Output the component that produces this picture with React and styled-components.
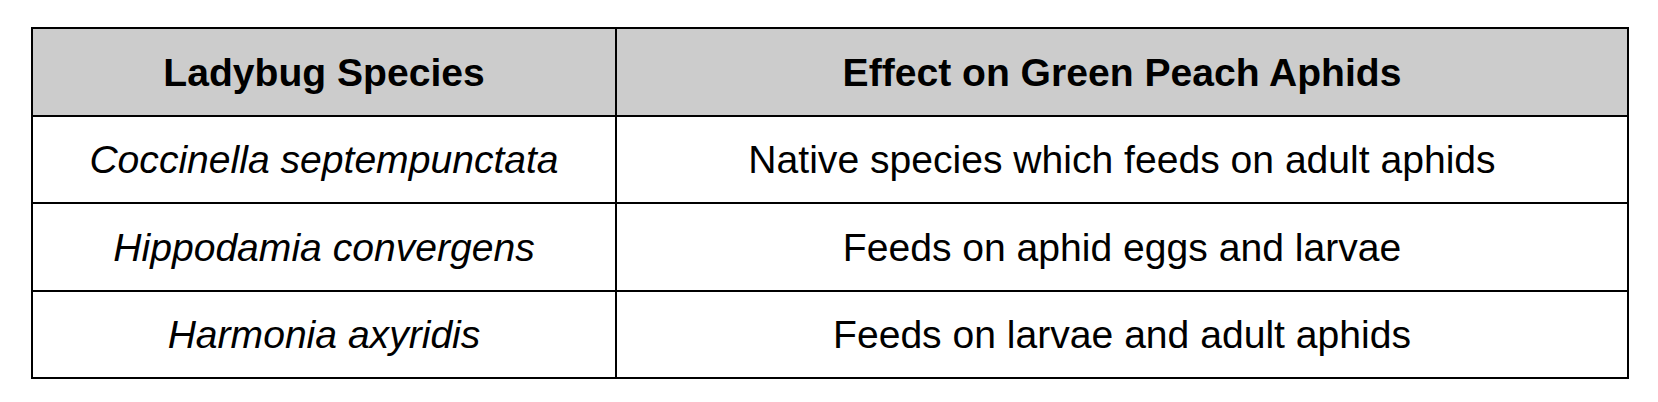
import React from "react";
import styled, { createGlobalStyle } from "styled-components";

const Global = createGlobalStyle`
  html, body { margin: 0; padding: 0; background: #fff; }
  body { font-family: "Liberation Sans", Arial, sans-serif; color: #000; }
`;

const Page = styled.div`
  padding: 27px 0 0 31px;
`;

const Table = styled.div`
  display: grid;
  grid-template-columns: 584px 1012px;
  grid-auto-rows: 87.5px;
  width: max-content;
  border-top: 2px solid #000;
  border-left: 2px solid #000;
`;

const Cell = styled.div`
  display: flex;
  align-items: center;
  justify-content: center;
  box-sizing: border-box;
  border-right: 2px solid #000;
  border-bottom: 2px solid #000;
  font-size: 39.1px;
  line-height: 1;
  padding-top: 1px;
  white-space: nowrap;
  background: ${(p) => (p.$head ? "#cccccc" : "#ffffff")};
  font-weight: ${(p) => (p.$head ? 700 : 400)};
  font-style: ${(p) => (p.$italic ? "italic" : "normal")};
`;

const rows = [
  ["Coccinella septempunctata", "Native species which feeds on adult aphids"],
  ["Hippodamia convergens", "Feeds on aphid eggs and larvae"],
  ["Harmonia axyridis", "Feeds on larvae and adult aphids"],
];

export default function App() {
  return (
    <>
      <Global />
      <Page>
        <Table>
          <Cell $head>Ladybug Species</Cell>
          <Cell $head>Effect on Green Peach Aphids</Cell>
          {rows.map(([a, b]) => (
            <React.Fragment key={a}>
              <Cell $italic>{a}</Cell>
              <Cell>{b}</Cell>
            </React.Fragment>
          ))}
        </Table>
      </Page>
    </>
  );
}
